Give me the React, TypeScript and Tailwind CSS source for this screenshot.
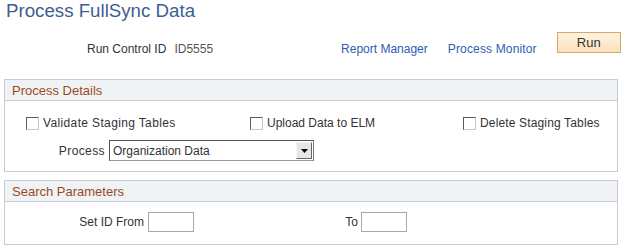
import { ReactNode } from 'react'

function Checkbox({ label, track }: { label: string; track: string }) {
  return (
    <label className="flex items-center gap-[4px]">
      <span className="block w-[13px] h-[13px] bg-white border border-t-[#5a5a5a] border-l-[#5a5a5a] border-b-[#c8c8c8] border-r-[#c8c8c8]" />
      <span className={`text-[12px] leading-[14px] text-[#333] ${track}`}>{label}</span>
    </label>
  )
}

function Box({ title, className, children }: { title: string; className: string; children: ReactNode }) {
  return (
    <section className={`ml-[4px] w-[614px] border border-[#c9cdd3] ${className}`}>
      <div className="h-[21px] bg-[#eff3f5] border-b border-[#c9cdd3] pl-[7px] pt-[3px] text-[13px] leading-[15px] text-[#9b4a1f]">
        {title}
      </div>
      {children}
    </section>
  )
}

function TextBox() {
  return <span className="block w-[46px] h-[20px] bg-white border border-[#a8a8a8]" />
}

export default function App() {
  return (
    <main className="w-[626px] h-[250px] bg-white overflow-hidden font-['Liberation_Sans',Arial,sans-serif]">
      <h1 className="pl-[6px] text-[18.7px] leading-[22px] text-[#3d5e91]">Process FullSync Data</h1>

      <div className="mt-[10px] h-[47px] flex items-start">
        <span className="ml-[87px] mt-[10px] text-[12px] leading-[14px] text-[#333]">Run Control ID</span>
        <span className="ml-[8px] mt-[10px] text-[12px] leading-[14px] text-[#555]">ID5555</span>
        <a className="ml-[128px] mt-[10px] text-[12px] leading-[14px] text-[#2d5cb3]">Report Manager</a>
        <a className="ml-[20px] mt-[10px] text-[12px] leading-[14px] tracking-[0.15px] text-[#2d5cb3]">Process Monitor</a>
        <button className="ml-[20px] w-[64px] h-[21px] border border-[#d7a66c] bg-gradient-to-b from-[#fdf3e2] to-[#fae1b8] text-[13px] leading-[15px] text-[#333]">
          Run
        </button>
      </div>

      <Box title="Process Details" className="h-[93px]">
        <div className="mt-[15px] flex items-center">
          <div className="ml-[21px] w-[224px]">
            <Checkbox label="Validate Staging Tables" track="tracking-[0.36px]" />
          </div>
          <div className="w-[213px]">
            <Checkbox label="Upload Data to ELM" track="" />
          </div>
          <Checkbox label="Delete Staging Tables" track="tracking-[0.15px]" />
        </div>
        <div className="mt-[10px] flex items-center">
          <span className="w-[100px] text-right text-[12px] leading-[14px] tracking-[0.4px] text-[#333]">Process</span>
          <div className="ml-[4px] w-[205px] h-[21px] flex items-center border border-t-[#555] border-l-[#555] border-r-[#777] border-b-[#999] bg-white">
            <span className="flex-1 pl-[3px] text-[12px] leading-[14px] text-[#333]">Organization Data</span>
            <span className="mr-[1px] w-[16px] h-[17px] flex items-center justify-center bg-[#e6e6e6] border border-t-[#f5f5f5] border-l-[#f5f5f5] border-r-[#666] border-b-[#666]">
              <svg width="7" height="4" viewBox="0 0 7 4">
                <path d="M0 0H7L3.5 4Z" fill="#000" />
              </svg>
            </span>
          </div>
        </div>
      </Box>

      <Box title="Search Parameters" className="mt-[8px] h-[65px]">
        <div className="mt-[10px] flex items-center">
          <span className="w-[139px] text-right text-[12px] leading-[14px] text-[#333]">Set ID From</span>
          <span className="ml-[4px]"><TextBox /></span>
          <span className="w-[164px] text-right text-[12px] leading-[14px] text-[#333]">To</span>
          <span className="ml-[3px]"><TextBox /></span>
        </div>
      </Box>
    </main>
  )
}
